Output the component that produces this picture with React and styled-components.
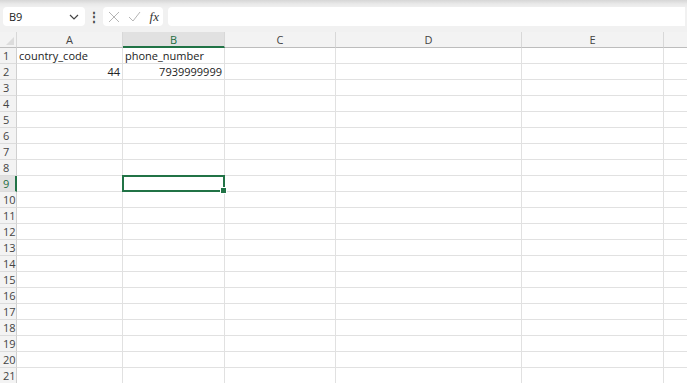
import React from "react";
import styled, { createGlobalStyle } from "styled-components";

const GlobalStyle = createGlobalStyle`
  body {
    margin: 0;
    overflow: hidden;
    background: #ffffff;
    font-family: "Open Sans", "Noto Sans", sans-serif;
  }
`;

const COLS = [
  { id: "A", width: 106 },
  { id: "B", width: 102 },
  { id: "C", width: 111 },
  { id: "D", width: 186 },
  { id: "E", width: 142 },
  { id: "F", width: 60 },
];

const DATA = {
  1: { A: { v: "country_code" }, B: { v: "phone_number" } },
  2: { A: { v: "44", right: true }, B: { v: "7939999999", right: true } },
};

const SELECTED = { row: 9, col: "B" };

const Wrapper = styled.div`
  width: 687px;
  height: 383px;
  display: flex;
  flex-direction: column;
  overflow: hidden;
  background: #ffffff;
`;

const Toolbar = styled.div`
  height: 32px;
  flex-shrink: 0;
  display: flex;
  align-items: center;
  gap: 4px;
  padding: 1px 2px 0 3px;
  box-sizing: border-box;
  background: linear-gradient(#d6d6d6 0px, #e9e9e9 4px, #f1f1f1 8px);
`;

const NameBox = styled.div`
  width: 82px;
  height: 19px;
  display: flex;
  align-items: center;
  justify-content: space-between;
  padding: 0 6px 0 6px;
  box-sizing: border-box;
  background: #fff;
  border-radius: 4px;
  font-size: 11px;
  color: #222;
`;

const Dots = styled.div`
  width: 10px;
  display: flex;
  justify-content: center;
  color: #444;
  font-size: 12px;
  font-weight: bold;
`;

const FormulaButtons = styled.div`
  width: 60px;
  height: 19px;
  display: flex;
  align-items: center;
  justify-content: space-between;
  padding: 0 4px 0 5px;
  box-sizing: border-box;
  background: #fff;
  border-radius: 4px;
`;

const Fx = styled.span`
  font-family: "Liberation Serif", serif;
  font-style: italic;
  font-size: 13px;
  color: #333;
`;

const FormulaInput = styled.div`
  flex: 1;
  height: 19px;
  background: #fff;
  border-radius: 4px 0 0 4px;
  margin-left: 1px;
`;

const Grid = styled.div`
  flex: 1;
  min-height: 0;
  display: grid;
  grid-template-columns: 17px ${COLS.map((c) => c.width + "px").join(" ")};
  grid-template-rows: 16px;
  grid-auto-rows: 16px;
  font-size: 11px;
  color: #222;
`;

const Corner = styled.div`
  background: #f3f3f3;
  border-bottom: 1px solid #bdbdbd;
  border-right: 1px solid #d8d8d8;
  position: relative;
  &::after {
    content: "";
    position: absolute;
    right: 2px;
    bottom: 2px;
    border-left: 8px solid transparent;
    border-bottom: 8px solid #dcdcdc;
  }
`;

const ColHeader = styled.div`
  display: flex;
  align-items: center;
  justify-content: center;
  background: ${(p) => (p.$active ? "#e1e1e1" : "#f3f3f3")};
  border-right: 1px solid #d8d8d8;
  border-bottom: ${(p) => (p.$active ? "2px solid #217346" : "1px solid #bdbdbd")};
  color: ${(p) => (p.$active ? "#1e6e42" : "#444")};
  box-sizing: border-box;
`;

const RowHeader = styled.div`
  display: flex;
  align-items: center;
  padding-left: 3px;
  background: ${(p) => (p.$active ? "#e1e1e1" : "#f3f3f3")};
  border-right: ${(p) => (p.$active ? "2px solid #217346" : "1px solid #d0d0d0")};
  border-bottom: 1px solid #dcdcdc;
  color: ${(p) => (p.$active ? "#1e6e42" : "#444")};
  box-sizing: border-box;
`;

const Cell = styled.div`
  position: relative;
  display: flex;
  align-items: center;
  justify-content: ${(p) => (p.$right ? "flex-end" : "flex-start")};
  padding: 0 2px;
  border-right: 1px solid #e1e1e1;
  border-bottom: 1px solid #e1e1e1;
  box-sizing: border-box;
  white-space: nowrap;
`;

const Selection = styled.div`
  position: absolute;
  left: -1px;
  top: -1px;
  right: -1px;
  bottom: -1px;
  border: 2px solid #217346;
  z-index: 2;
  &::after {
    content: "";
    position: absolute;
    right: -4px;
    bottom: -4px;
    width: 5px;
    height: 5px;
    background: #217346;
    border: 1px solid #fff;
  }
`;

const Chevron = () => (
  <svg width="10" height="6" viewBox="0 0 10 6" fill="none">
    <path d="M1 1l4 4 4-4" stroke="#444" strokeWidth="1.2" />
  </svg>
);

const Cross = () => (
  <svg width="12" height="12" viewBox="0 0 12 12" fill="none">
    <path d="M1 1l10 10M11 1L1 11" stroke="#b5b5b5" strokeWidth="1" />
  </svg>
);

const Check = () => (
  <svg width="13" height="11" viewBox="0 0 13 11" fill="none">
    <path d="M1 6l4 4 7-9" stroke="#b5b5b5" strokeWidth="1" />
  </svg>
);

const App = () => {
  const rows = Array.from({ length: 21 }, (_, i) => i + 1);
  return (
    <Wrapper>
      <GlobalStyle />
      <Toolbar>
        <NameBox>
          B9
          <Chevron />
        </NameBox>
        <Dots>⋮</Dots>
        <FormulaButtons>
          <Cross />
          <Check />
          <Fx>fx</Fx>
        </FormulaButtons>
        <FormulaInput />
      </Toolbar>
      <Grid>
        <Corner />
        {COLS.map((c) => (
          <ColHeader key={c.id} $active={c.id === SELECTED.col}>
            {c.id === "F" ? "" : c.id}
          </ColHeader>
        ))}
        {rows.map((r) => (
          <React.Fragment key={r}>
            <RowHeader $active={r === SELECTED.row}>{r}</RowHeader>
            {COLS.map((c) => {
              const d = DATA[r] && DATA[r][c.id];
              const sel = r === SELECTED.row && c.id === SELECTED.col;
              return (
                <Cell key={c.id} $right={d && d.right}>
                  {d ? d.v : null}
                  {sel && <Selection />}
                </Cell>
              );
            })}
          </React.Fragment>
        ))}
      </Grid>
    </Wrapper>
  );
};

export default App;
